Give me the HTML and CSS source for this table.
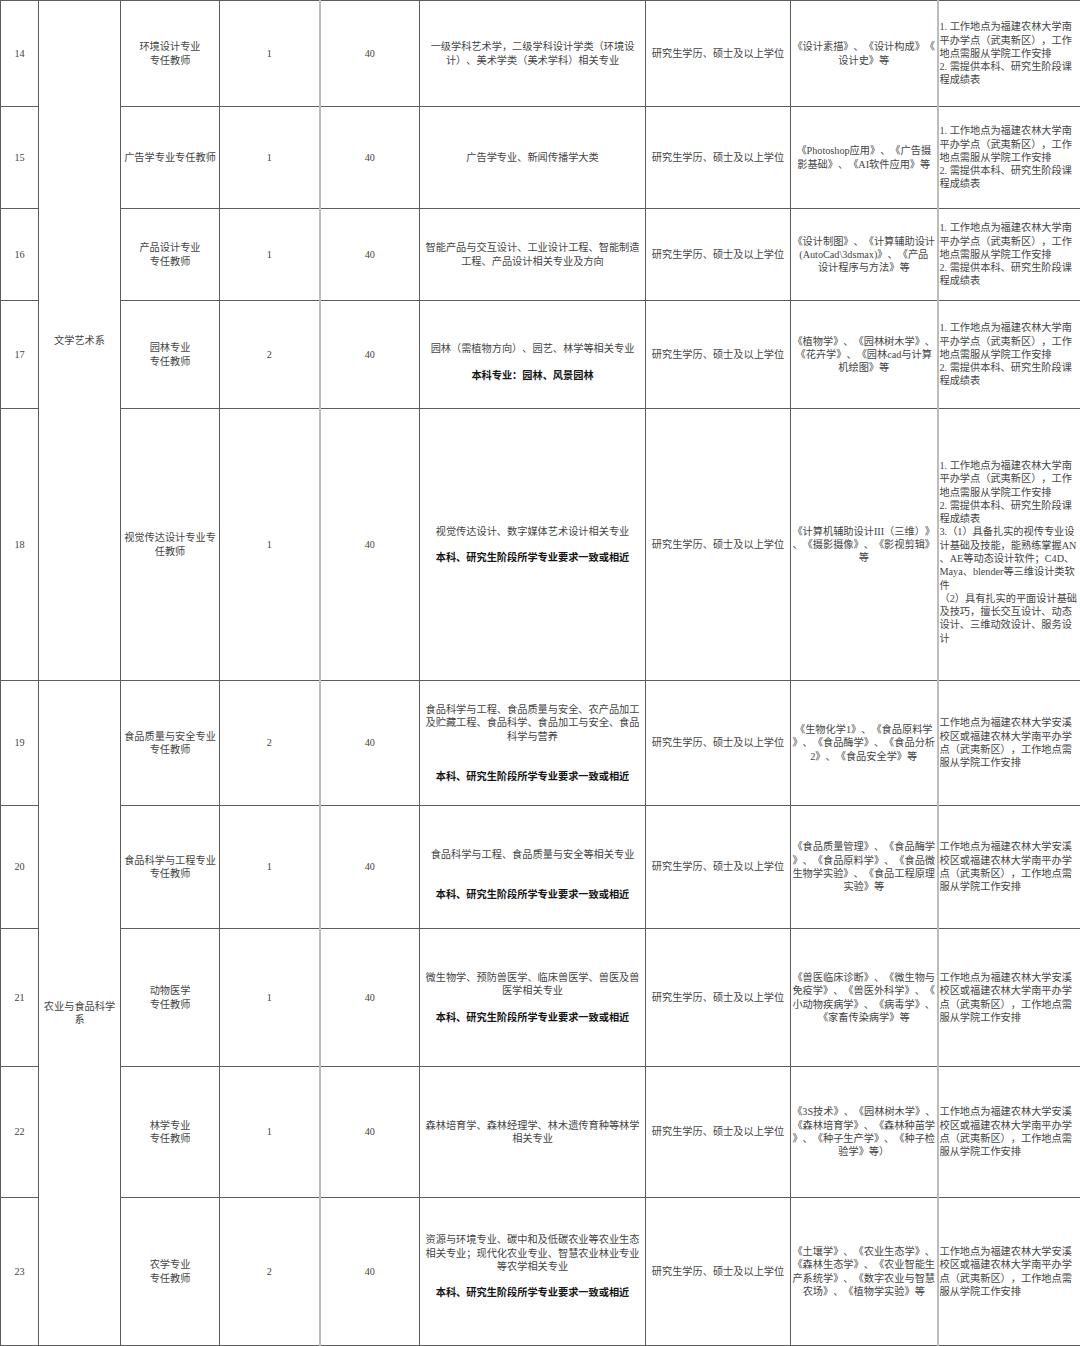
FILE: index.html
```html
<!DOCTYPE html>
<html lang="zh-CN">
<head>
<meta charset="utf-8">
<title>招聘岗位表</title>
<link rel="stylesheet" href="styles.css">
</head>
<body>
<table class="grid">
<colgroup>
<col class="c-no"><col class="c-dept"><col class="c-pos"><col class="c-num"><col class="c-age"><col class="c-major"><col class="c-edu"><col class="c-course"><col class="c-note">
</colgroup>
<tbody>
<tr class="r14">
<td>14</td>
<td rowspan="5">文学艺术系</td>
<td>环境设计专业<br>专任教师</td>
<td class="age-l">1</td>
<td class="lt">40</td>
<td>一级学科艺术学，二级学科设计学类（环境设<br>计）、美术学类（美术学科）相关专业</td>
<td>研究生学历、硕士及以上学位</td>
<td>《设计素描》、《设计构成》《<br>设计史》等</td>
<td class="note">1. 工作地点为福建农林大学南<br>平办学点（武夷新区），工作<br>地点需服从学院工作安排<br>2. 需提供本科、研究生阶段课<br>程成绩表</td>
</tr>
<tr class="r15">
<td>15</td>
<td>广告学专业专任教师</td>
<td>1</td>
<td class="lt">40</td>
<td>广告学专业、新闻传播学大类</td>
<td>研究生学历、硕士及以上学位</td>
<td>《Photoshop应用》、《广告摄<br>影基础》、《AI软件应用》等</td>
<td class="note">1. 工作地点为福建农林大学南<br>平办学点（武夷新区），工作<br>地点需服从学院工作安排<br>2. 需提供本科、研究生阶段课<br>程成绩表</td>
</tr>
<tr class="r16">
<td>16</td>
<td>产品设计专业<br>专任教师</td>
<td>1</td>
<td class="lt">40</td>
<td>智能产品与交互设计、工业设计工程、智能制造<br>工程、产品设计相关专业及方向</td>
<td>研究生学历、硕士及以上学位</td>
<td>《设计制图》、《计算辅助设计<br>(AutoCad\3dsmax)》、《产品<br>设计程序与方法》等</td>
<td class="note">1. 工作地点为福建农林大学南<br>平办学点（武夷新区），工作<br>地点需服从学院工作安排<br>2. 需提供本科、研究生阶段课<br>程成绩表</td>
</tr>
<tr class="r17">
<td>17</td>
<td>园林专业<br>专任教师</td>
<td>2</td>
<td class="lt">40</td>
<td class="down"><span>园林（需植物方向）、园艺、林学等相关专业</span><br><br><b>本科专业：园林、风景园林</b></td>
<td>研究生学历、硕士及以上学位</td>
<td>《植物学》、《园林树木学》、<br>《花卉学》、《园林cad与计算<br>机绘图》等</td>
<td class="note">1. 工作地点为福建农林大学南<br>平办学点（武夷新区），工作<br>地点需服从学院工作安排<br>2. 需提供本科、研究生阶段课<br>程成绩表</td>
</tr>
<tr class="r18">
<td>18</td>
<td>视觉传达设计专业专<br>任教师</td>
<td>1</td>
<td class="lt">40</td>
<td>视觉传达设计、数字媒体艺术设计相关专业<br><br><b>本科、研究生阶段所学专业要求一致或相近</b></td>
<td>研究生学历、硕士及以上学位</td>
<td>《计算机辅助设计III（三维）》<br>、《摄影摄像》、《影视剪辑》<br>等</td>
<td class="note down">1. 工作地点为福建农林大学南<br>平办学点（武夷新区），工作<br>地点需服从学院工作安排<br>2. 需提供本科、研究生阶段课<br>程成绩表<br>3.（1）具备扎实的视传专业设<br>计基础及技能，能熟练掌握AN<br>、AE等动态设计软件；C4D、<br>Maya、blender等三维设计类软<br>件<br>（2）具有扎实的平面设计基础<br>及技巧，擅长交互设计、动态<br>设计、三维动效设计、服务设<br>计</td>
</tr>
<tr class="r19">
<td>19</td>
<td rowspan="5">农业与食品科学<br>系</td>
<td>食品质量与安全专业<br>专任教师</td>
<td>2</td>
<td class="lt">40</td>
<td>食品科学与工程、食品质量与安全、农产品加工<br>及贮藏工程、食品科学、食品加工与安全、食品<br>科学与营养<br><br><br><b>本科、研究生阶段所学专业要求一致或相近</b></td>
<td>研究生学历、硕士及以上学位</td>
<td>《生物化学1》、《食品原料学<br>》、《食品酶学》、《食品分析<br>2》、《食品安全学》等</td>
<td class="note">工作地点为福建农林大学安溪<br>校区或福建农林大学南平办学<br>点（武夷新区），工作地点需<br>服从学院工作安排</td>
</tr>
<tr class="r20">
<td>20</td>
<td>食品科学与工程专业<br>专任教师</td>
<td>1</td>
<td class="lt">40</td>
<td class="down"><span>食品科学与工程、食品质量与安全等相关专业</span><br><br><br><b>本科、研究生阶段所学专业要求一致或相近</b></td>
<td>研究生学历、硕士及以上学位</td>
<td>《食品质量管理》、《食品酶学<br>》、《食品原料学》、《食品微<br>生物学实验》、《食品工程原理<br>实验》等</td>
<td class="note">工作地点为福建农林大学安溪<br>校区或福建农林大学南平办学<br>点（武夷新区），工作地点需<br>服从学院工作安排</td>
</tr>
<tr class="r21">
<td>21</td>
<td>动物医学<br>专任教师</td>
<td>1</td>
<td class="lt">40</td>
<td>微生物学、预防兽医学、临床兽医学、兽医及兽<br>医学相关专业<br><br><b>本科、研究生阶段所学专业要求一致或相近</b></td>
<td>研究生学历、硕士及以上学位</td>
<td>《兽医临床诊断》、《微生物与<br>免疫学》、《兽医外科学》、《<br>小动物疾病学》、《病毒学》、<br>《家畜传染病学》等</td>
<td class="note">工作地点为福建农林大学安溪<br>校区或福建农林大学南平办学<br>点（武夷新区），工作地点需<br>服从学院工作安排</td>
</tr>
<tr class="r22">
<td>22</td>
<td>林学专业<br>专任教师</td>
<td>1</td>
<td class="lt">40</td>
<td>森林培育学、森林经理学、林木遗传育种等林学<br>相关专业</td>
<td>研究生学历、硕士及以上学位</td>
<td>《3S技术》、《园林树木学》、<br>《森林培育学》、《森林种苗学<br>》、《种子生产学》、《种子检<br>验学》等）</td>
<td class="note">工作地点为福建农林大学安溪<br>校区或福建农林大学南平办学<br>点（武夷新区），工作地点需<br>服从学院工作安排</td>
</tr>
<tr class="r23">
<td>23</td>
<td>农学专业<br>专任教师</td>
<td>2</td>
<td class="lt">40</td>
<td class="up">资源与环境专业、碳中和及低碳农业等农业生态<br>相关专业；现代化农业专业、智慧农业林业专业<br>等农学相关专业<br><br><b>本科、研究生阶段所学专业要求一致或相近</b></td>
<td>研究生学历、硕士及以上学位</td>
<td>《土壤学》、《农业生态学》、<br>《森林生态学》、《农业智能生<br>产系统学》、《数字农业与智慧<br>农场》、《植物学实验》等</td>
<td class="note">工作地点为福建农林大学安溪<br>校区或福建农林大学南平办学<br>点（武夷新区），工作地点需<br>服从学院工作安排</td>
</tr>
</tbody>
</table>
</body>
</html>
```
FILE: styles.css
```css
html, body {
  margin: 0;
  padding: 0;
  background: #ffffff;
}

.grid {
  width: 1080px;
  table-layout: fixed;
  border-collapse: collapse;
  font-family: "Liberation Serif", "Noto Sans CJK SC", serif;
  font-size: 10.2px;
  line-height: 13.3px;
  color: #444444;
  text-spacing-trim: space-all;
  font-kerning: none;
}

.c-no { width: 38px; }
.c-dept { width: 82px; }
.c-pos { width: 99px; }
.c-num { width: 100px; }
.c-age { width: 100px; }
.c-major { width: 226px; }
.c-edu { width: 145px; }
.c-course { width: 147px; }
.c-note { width: 143px; }

.grid td {
  border: 1px solid #5c5c5c;
  padding: 0 1px;
  text-align: center;
  vertical-align: middle;
  white-space: nowrap;
  overflow: hidden;
  font-weight: 400;
}

.grid td.lt {
  border-left: 2px solid #bdbdbd;
}

.grid td.note {
  text-align: left;
  border-left: 2px solid #bdbdbd;
  padding-left: 1px;
}

.grid td.down {
  padding-top: 15px;
}

.grid td.up {
  padding-bottom: 10px;
}

.grid b {
  font-weight: 700;
  color: #161616;
}

.r14 { height: 106px; }
.r15 { height: 102px; }
.r16 { height: 92px; }
.r17 { height: 108px; }
.r18 { height: 272px; }
.r19 { height: 125px; }
.r20 { height: 123px; }
.r21 { height: 138px; }
.r22 { height: 131px; }
.r23 { height: 148px; }
```
